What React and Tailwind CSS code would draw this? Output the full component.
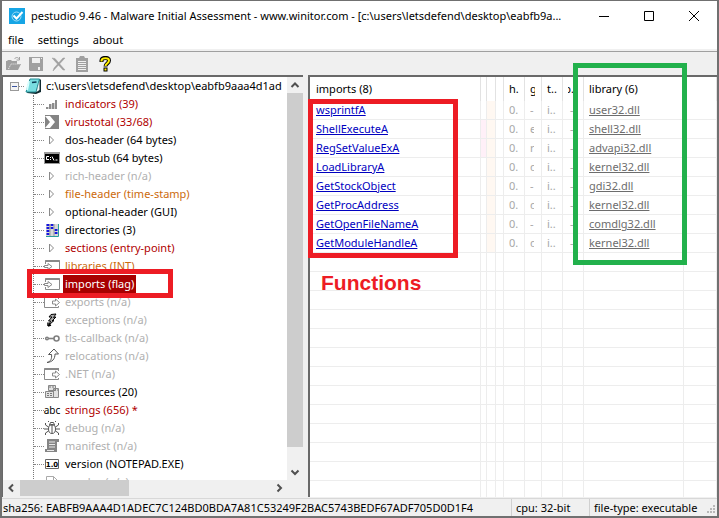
const glyphs = {
  bars: <g><path d="M2 11h2v2H2zM5 8h2v5H5zM8 7h2v6H8zM11 4h2v9h-2z" fill="#8c8c8c" /><path d="M4 11h1v2H4zM7 8h1v5H7zM10 7h1v6h-1z" fill="#cfcfcf" /></g>,
  vt: <g><path d="M1 1h14v14H1z" fill="#848484" /><path d="M1 2h5l5 6-5 6H1l5-6z" fill="#fff" /></g>,
  tri: <path d="M5.500 4v8l4-4z" fill="#fff" stroke="#8a8a8a" />,
  cmd: <g><path d="M0 2h16v12H0z" fill="#9a9a9a" /><path d="M1 4h14v9H1z" /><path d="M5 6.500H2.500v3H5M6.500 7v1M6.500 9v1M8 6.500l2 4M11.500 10h2" stroke="#fff" fill="none" /></g>,
  dir: <g><path d="M2 2h12v12H2z" fill="#d8d8d8" /><path d="M2.500 3h3M6.500 3h3M2.500 6h3M6.500 6h3M2.500 9h3M2.500 12h3M10.500 8h3M10.500 11h3" stroke="#1414e0" strokeWidth="2" /><path d="M6 2v12M10 2v12" stroke="#999" /><path d="M2 14.500h12.500V2" stroke="#2b9c9c" fill="none" /></g>,
  imp: <g fill="#fff" stroke="#8a8a8a"><path d="M1.500 6V2.500h14v11h-14V11" /><path d="M1.500 3h14" strokeWidth="2" /><path d="M.5 7.500H4v-2l4 3-4 3v-2H.5z" /></g>,
  exp: <g fill="#fff" stroke="#8a8a8a"><path d="M14.500 5V2.500H.5v11h14V12" /><path d="M.5 3H15" strokeWidth="2" /><path d="M8.500 7h3V5l4 3.500-4 3.500v-2h-3z" /></g>,
  bolt: <g><path d="M7 2.500l5-.5-2.500 3.500 2.500-.5L8 9l2-.5L5 13l1.500-4H4.500L8 5H5z" fill="#aaa" stroke="#000" /><path d="M4 14v-3.500M4 14l3-1" stroke="#000" strokeWidth="1.500" /></g>,
  key: <g fill="none" stroke="#808080" strokeWidth="1.600"><circle cx="12.500" cy="8.500" r="2.500" /><circle cx="3" cy="8.500" r="1.300" /><path d="M5 8.500h5" /></g>,
  reloc: <path d="M3 14.500c4-1 5-4 4.500-8H4.500L10 1l4.500 5h-3.500c0 5-2.500 8-8 8.500z" fill="#fff" stroke="#555" />,
  res: <g fill="#e2e2e2" stroke="#888"><path d="M4.500 1.500h7v5h-7zM9.500 4.500h5v9h-5zM1.500 7.500h8v6h-8z" /><path d="M5 3h6M3 9.500h5M3 11.500h5M10 6h4" stroke="#777" strokeDasharray="2 1" /></g>,
  bug: <g fill="none" stroke="#555"><ellipse cx="8" cy="9" rx="3.500" ry="4.500" fill="#fff" /><path d="M8 5v8M5.500 5l1-2.500h3l1 2.500zM4.500 7L1.500 5V3M11.500 7l3-2V3M4 9H0M12 9h4M4.500 11l-3 2v2M11.500 11l3 2v2M5 2L4 1M11 2l1-1" /></g>,
  man: <g><path d="M3 1h12v3h-2v10H1v-3h2z" fill="#858585" /><path d="M5 4h6M5 6.500h6M5 9h6M3 12.500h7" stroke="#e8e8e8" /></g>,
  ver: <g><path d="M1.500 3.500h13v9h-13z" fill="#fff" stroke="#666" /><text x="8" y="11" textAnchor="middle" fontSize="7" fontWeight="700" fontFamily="DejaVu Sans, sans-serif">1.0</text></g>,
  doc: <path d="M2.500 15V2.500h7l4 4V15M9.500 2.500v4h4" fill="#fff" stroke="#aaa" />,
};

const Icon = ({ name }) => name === 'abc'
  ? <span className="flex w-4 shrink-0 justify-center text-[10px]" aria-hidden="true">abc</span>
  : <svg className="size-4 shrink-0" viewBox="0 0 16 16" aria-hidden="true">{glyphs[name]}</svg>;

const RED = 'text-[#b00000]';
const BLACK = 'text-black';
const GRAY = 'text-[#b0b0b0]';
const ORANGE = 'text-[#cc6a0c]';

const tree = [
  ['bars', 'indicators (39)', RED],
  ['vt', 'virustotal (33/68)', RED],
  ['tri', 'dos-header (64 bytes)', BLACK],
  ['cmd', 'dos-stub (64 bytes)', BLACK],
  ['tri', 'rich-header (n/a)', GRAY],
  ['tri', 'file-header (time-stamp)', ORANGE],
  ['tri', 'optional-header (GUI)', BLACK],
  ['dir', 'directories (3)', BLACK],
  ['tri', 'sections (entry-point)', RED],
  ['imp', 'libraries (INT)', ORANGE],
  ['imp', 'imports (flag)', 'bg-[#a80000] text-white'],
  ['exp', 'exports (n/a)', GRAY],
  ['bolt', 'exceptions (n/a)', GRAY],
  ['key', 'tls-callback (n/a)', GRAY],
  ['reloc', 'relocations (n/a)', GRAY],
  ['exp', '.NET (n/a)', GRAY],
  ['res', 'resources (20)', BLACK],
  ['abc', 'strings (656) *', RED],
  ['bug', 'debug (n/a)', GRAY],
  ['man', 'manifest (n/a)', GRAY],
  ['ver', 'version (NOTEPAD.EXE)', BLACK],
  ['doc', 'overlay (n/a)', GRAY],
];

const rows = [
  ['wsprintfA', '-', 'user32.dll'],
  ['ShellExecuteA', 'e', 'shell32.dll'],
  ['RegSetValueExA', 'r', 'advapi32.dll'],
  ['LoadLibraryA', 'd', 'kernel32.dll'],
  ['GetStockObject', '-', 'gdi32.dll'],
  ['GetProcAddress', 'd', 'kernel32.dll'],
  ['GetOpenFileNameA', '-', 'comdlg32.dll'],
  ['GetModuleHandleA', 'd', 'kernel32.dll'],
];
const blanks = Array.from({ length: 13 }, (_, i) => i);
const columns = Array.from({ length: 10 }, (_, i) => i);

const cell = 'overflow-hidden border-b border-r border-[#ededed] p-0 text-[#a8a8a8]';
const head = 'overflow-hidden border-r border-[#e2e2e2] p-0 text-left font-normal';

const Chevron = ({ d }) => (
  <svg viewBox="0 0 16 16" className="size-4 shrink-0" aria-hidden="true"><path d={d} fill="none" stroke="#505050" strokeWidth="2" /></svg>
);

const ToolButton = ({ label, children }) => (
  <button aria-label={label}><svg className="size-4" viewBox="0 0 16 16" aria-hidden="true">{children}</svg></button>
);

function Toolbar() {
  return (
    <div className="flex h-[24px] shrink-0 items-center gap-[7px] border-t border-[#a0a0a0] pl-[3px]">
      <ToolButton label="Open">
        <path d="M1 14V5h1l1-1h3l1 1h5v3" fill="#a0a0a0" /><path d="M1 14l3-6h12l-3 6z" fill="#a0a0a0" /><path d="M3.500 13l2.500-5h9" stroke="#f0f0f0" fill="none" strokeDasharray="1 1" /><path d="M9.500 3c1-2 4-2 5 .5M14.500 1v3h-3" stroke="#a0a0a0" fill="none" />
      </ToolButton>
      <ToolButton label="Save">
        <path d="M1 1h14v14H2l-1-1z" fill="#a0a0a0" /><path d="M4 2h8v5H4zM10 11h2v3h-2z" fill="#f0f0f0" /><path d="M13 2h1v1h-1z" fill="#f0f0f0" />
      </ToolButton>
      <ToolButton label="Delete">
        <path d="M1 2l3 .5L14 14h-2zM14 2L3 14l-1 1 1-3L12 2z" fill="#a0a0a0" stroke="#a0a0a0" strokeWidth=".5" />
      </ToolButton>
      <ToolButton label="Copy report">
        <path d="M2 2h3l1-2h4l1 2h3v14H2z" fill="#a0a0a0" /><path d="M4 5.500h8M4 7.500h8M4 9.500h8M4 11.500h8M4 13.500h8" stroke="#f0f0f0" />
      </ToolButton>
      <ToolButton label="Help">
        <path d="M4.500 6V4.500C5 1 12 1 12 4.500c0 3-3.500 3-3.500 6" fill="none" stroke="#000" strokeWidth="4" /><path d="M6.500 11.500h4v4h-4z" />
        <path d="M4.500 5.500V4.500C5 1.500 12 1.500 12 4.500c0 3-3.500 3-3.500 5.500M7.500 13.500h2" fill="none" stroke="#ffee00" strokeWidth="2" />
      </ToolButton>
    </div>
  );
}

function Tree() {
  return (
    <section className="flex w-[301px] shrink-0 flex-col border-l border-t-2 border-[#696969] bg-white" aria-label="File structure">
      <div className="flex min-h-0 flex-1">
        <div className="min-w-0 flex-1 overflow-hidden">
          <div className="flex h-[18px] items-center whitespace-nowrap pl-[7px]">
            <button aria-label="Collapse" className="flex size-[9px] shrink-0 items-center justify-center border border-[#999] bg-[#f4f4f4]">
              <span className="h-px w-[5px] bg-[#3b55a0]" />
            </button>
            <span className="w-[5px] shrink-0 border-t border-dotted border-[#888]" />
            <svg className="size-[18px] shrink-0" viewBox="0 0 18 18" aria-hidden="true">
              <path d="M7 3l9-1 1 1v12l-5 2-9-1z" fill="#102a30" />
              <path d="M6 2h9.500L12 15H2z" fill="#79dde0" stroke="#208a92" />
              <path d="M15.500 3v10l-3 2z" fill="#e6f6f6" />
              <path d="M5 4l-2 9" stroke="#d8ffff" strokeWidth="2" />
              <path d="M8 5.500l4.500-.5" stroke="#0a3a50" strokeWidth="1.500" />
            </svg>
            <span className="pl-1">c:\users\letsdefend\desktop\eabfb9aaa4d1ad</span>
          </div>
          <ul className="ml-[30px] border-l border-dotted border-[#777]">
            {tree.map(([icon, text, tone]) => (
              <li key={text} className="flex h-[18px] items-center whitespace-nowrap">
                <span className="w-[10px] shrink-0 border-t border-dotted border-[#888]" />
                <Icon name={icon} />
                <span className={`ml-[3px] h-[18px] px-[2px] leading-[18px] ${tone}`}>{text}</span>
              </li>
            ))}
          </ul>
        </div>
        <div className="flex w-4 shrink-0 flex-col bg-[#f0f0f0]">
          <Chevron d="M4.500 10L8 6.500l3.500 3.500" />
          <div className="mb-[17px] flex-1 bg-[#cdcdcd]" />
          <Chevron d="M4.500 6.500L8 10l3.500-3.500" />
        </div>
      </div>
      <div className="flex h-[17px] shrink-0 bg-[#f0f0f0] pr-4">
        <Chevron d="M10 4.500L6.500 8l3.500 3.500" />
        <div className="ml-px h-4 w-[109px] bg-[#cdcdcd]" />
        <div className="ml-auto"><Chevron d="M6.500 4.500L10 8l-3.500 3.500" /></div>
      </div>
    </section>
  );
}

function Imports() {
  return (
    <section className="min-w-0 flex-1 overflow-hidden border-l-2 border-t-2 border-[#696969] bg-white" aria-label="Imports">
      <table className="w-full table-fixed border-separate border-spacing-0">
        <colgroup>
          <col className="w-[171px]" /><col className="w-[6px]" /><col className="w-[9px]" /><col className="w-[8px]" /><col className="w-[21px]" />
          <col className="w-[17px]" /><col className="w-[21px]" /><col className="w-[21px]" /><col className="w-[100px]" /><col />
        </colgroup>
        <thead>
          <tr className="h-[24px]">
            <th className={`${head} pl-[6px]`}>imports (8)</th>
            <th className={head} /><th className={head} /><th className={head} />
            <th className={`${head} pl-[5px]`}>h.</th>
            <th className={`${head} pl-[5px]`}><div className="w-[5px] overflow-hidden">g</div></th>
            <th className={`${head} pl-[5px]`}>t..</th>
            <th className={`${head} pl-[5px]`}><div className="flex w-[6px] justify-end overflow-hidden">p.</div></th>
            <th className={`${head} pl-[5px]`}>library (6)</th>
            <th className={head} />
          </tr>
        </thead>
        <tbody>
          {rows.map(([fn, group, lib], i) => (
            <tr key={fn} className="h-[19px]">
              <td className={`${cell} pl-[6px]`}><a href="#" className="text-[#0000c0] underline">{fn}</a></td>
              <td className={`${cell} ${i === 1 || i === 2 ? 'bg-[#fff0f8]' : ''}`} />
              <td className={`${cell} bg-[#fff8f2]`} />
              <td className={cell} />
              <td className={`${cell} pl-[5px]`}>0.</td>
              <td className={`${cell} pl-[5px]`}><div className="w-[4px] overflow-hidden">{group}</div></td>
              <td className={`${cell} pl-[5px]`}>i..</td>
              <td className={`${cell} pl-[7px]`}>-</td>
              <td className={`${cell} pl-[5px]`}><a href="#" className="text-[#6d6d6d] underline">{lib}</a></td>
              <td className={cell} />
            </tr>
          ))}
          {blanks.map((b) => (
            <tr key={b} className="h-[19px]">{columns.map((c) => <td key={c} className={cell} />)}</tr>
          ))}
        </tbody>
      </table>
    </section>
  );
}

export default function App() {
  return (
    <div className="relative flex h-screen flex-col overflow-hidden bg-[#f0f0f0] font-['Noto_Sans','Open_Sans',sans-serif] text-[11px] leading-[16px] text-black">
      <div className="flex min-h-0 flex-1 flex-col border-x-2 border-b-2 border-t border-[#707070]">
        <header className="flex h-[30px] shrink-0 items-center bg-white pl-[7px]">
          <svg className="size-4 shrink-0" viewBox="0 0 16 16" aria-hidden="true">
            <path d="M0 0h16v16H0z" fill="#16a5e5" /><circle cx="7.500" cy="8.500" r="4.500" fill="none" stroke="#9edcf5" />
            <path d="M4.500 7.500l3 3 6-6.500" fill="none" stroke="#fff" strokeWidth="2" />
          </svg>
          <h1 className="min-w-0 flex-1 whitespace-nowrap pl-[6px]">pestudio 9.46 - Malware Initial Assessment - www.winitor.com - [c:\users\letsdefend\desktop\eabfb9a...</h1>
          <div className="flex shrink-0 gap-[25px] pr-[13px]">
            <button aria-label="Minimize"><svg className="size-5" viewBox="0 0 20 20"><path d="M5 10.500h10" stroke="#000" /></svg></button>
            <button aria-label="Maximize"><svg className="size-5" viewBox="0 0 20 20"><path d="M5.500 5.500h9v9h-9z" fill="none" stroke="#000" /></svg></button>
            <button aria-label="Close"><svg className="size-5" viewBox="0 0 20 20"><path d="M5 5l10 10M15 5L5 15" stroke="#000" /></svg></button>
          </div>
        </header>
        <nav className="flex h-[20px] shrink-0 items-center gap-[14px] border-b-2 border-[#f0f0f0] bg-white pl-[6px]">
          <button>file</button><button>settings</button><button>about</button>
        </nav>
        <Toolbar />
        <main className="flex min-h-0 flex-1 gap-[5px] pb-px"><Tree /><Imports /></main>
        <footer className="flex h-[18px] shrink-0 items-stretch border-t border-[#d8d8d8] leading-[18px]">
          <span className="min-w-0 flex-1 whitespace-nowrap pl-px">sha256: EABFB9AAA4D1ADEC7C124BD0BDA7A81C53249F2BAC5743BEDF67ADF705D0D1F4</span>
          <span className="w-[78px] border-l border-[#d0d0d0] pl-1">cpu: 32-bit</span>
          <span className="w-[116px] border-l border-[#d0d0d0] pl-1">file-type: executable</span>
          <svg className="mb-px size-3 shrink-0 self-end" viewBox="0 0 12 12" aria-hidden="true">
            <path d="M8 2h2v2H8zM5 5h2v2H5zM8 5h2v2H8zM2 8h2v2H2zM5 8h2v2H5zM8 8h2v2H8z" fill="#b8b8b8" />
          </svg>
        </footer>
      </div>
      <div className="pointer-events-none absolute left-[27px] top-[269px] h-[29px] w-[146px] border-[5px] border-[#ed1c24]" />
      <div className="pointer-events-none absolute left-[308px] top-[99px] h-[159px] w-[150px] border-[5px] border-[#ed1c24]" />
      <div className="pointer-events-none absolute left-[573px] top-[63px] h-[202px] w-[114px] border-[5px] border-[#22b14c]" />
      <p className="pointer-events-none absolute left-[321px] top-[271px] font-['Liberation_Sans',sans-serif] text-[21px] font-bold leading-[24px] text-[#ed1c24]">Functions</p>
    </div>
  );
}
